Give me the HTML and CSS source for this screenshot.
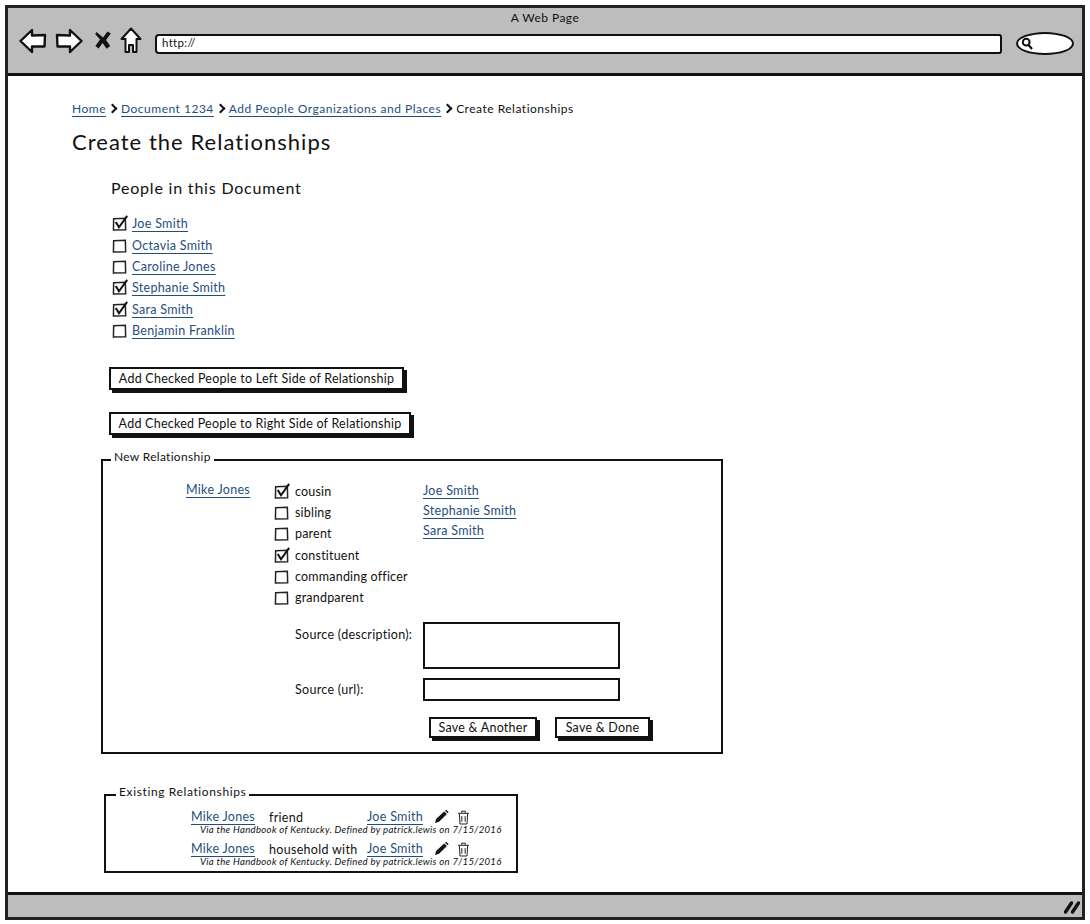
FILE: index.html
```html
<!DOCTYPE html>
<html lang="en">
<head>
    <meta charset="UTF-8">
    <meta name="viewport" content="width=device-width, initial-scale=1.0">
    <title>Create the Relationships</title>
    <link rel="stylesheet" href="styles.css">
</head>
<body>
    <svg class="icon-defs" width="0" height="0">
        <symbol id="box" viewBox="0 0 16 16">
            <path d="M2.5 3.5 L13.5 3 L13.8 14 L2.3 14.2 Z" fill="#fff" stroke="#222" stroke-width="1.4"/>
        </symbol>
        <symbol id="box-checked" viewBox="0 0 16 16">
            <path d="M2.5 3.5 L13.5 3 L13.8 14 L2.3 14.2 Z" fill="#fff" stroke="#222" stroke-width="1.4"/>
            <path d="M4.5 6.5 L7.5 11.5 L15.2 .8" fill="none" stroke="#111" stroke-width="1.9"/>
        </symbol>
        <symbol id="pencil" viewBox="0 0 16 16">
            <path d="M1 15 L2.2 10.6 L10.8 2.6 L13.8 5.4 L5.4 13.6 Z" fill="#111"/>
            <path d="M11.8 1.8 L13 .8 L15.6 3.4 L14.6 4.6 Z" fill="#111"/>
        </symbol>
        <symbol id="trash" viewBox="0 0 14 16">
            <path d="M1 3.5 H13 M5 3 V1.2 H9 V3 M2.6 4 L3.2 15 H10.8 L11.4 4 M5.2 6.5 V12.5 M8.8 6.5 V12.5" fill="none" stroke="#111" stroke-width="1"/>
        </symbol>
    </svg>

    <div class="window">
        <header class="chrome">
            <div class="chrome-title">A Web Page</div>
            <div class="toolbar">
                <svg class="nav-icon back" width="28" height="26" viewBox="0 0 28 26"><path d="M1.5 13 L13 2 V7.5 L26 7 L25.5 18.5 L13 18.5 V24 Z" fill="#fff" stroke="#111" stroke-width="2.4" stroke-linejoin="round"/></svg>
                <svg class="nav-icon" width="28" height="26" viewBox="0 0 28 26"><path d="M26.5 13 L15 2 V7.5 L2 7 L2.5 18.5 L15 18.5 V24 Z" fill="#fff" stroke="#111" stroke-width="2.4" stroke-linejoin="round"/></svg>
                <svg class="nav-icon stop" width="16" height="18" viewBox="0 0 16 18"><path d="M1.5 1 L8 6.5 L12.5 .5 L15.8 2.5 L11 9 L15.2 15 L11.6 17.7 L7.6 12 L3.6 17.5 L.4 15 L5 8.6 L.2 3 Z" fill="#111"/></svg>
                <svg class="nav-icon home" width="22" height="27" viewBox="0 0 22 27"><path d="M11 1.5 L20.5 12 L16.5 12 L16.5 25 L13 25 L13 18 L9 18 L9 25 L5.5 25 L5.5 12 L1.5 12 Z" fill="#fff" stroke="#111" stroke-width="2" stroke-linejoin="round"/></svg>
                <div class="url-bar">http://</div>
                <div class="search-box">
                    <svg width="12" height="13" viewBox="0 0 12 13"><circle cx="5.2" cy="5.2" r="3.4" fill="none" stroke="#111" stroke-width="2"/><path d="M7.5 8 L11 12" stroke="#111" stroke-width="2.2"/></svg>
                </div>
            </div>
        </header>

        <main class="content">
            <nav class="breadcrumb">
                <a href="#">Home</a><span class="crumb-sep"></span>
                <a href="#">Document 1234</a><span class="crumb-sep"></span>
                <a href="#">Add People Organizations and Places</a><span class="crumb-sep"></span>
                <span>Create Relationships</span>
            </nav>
            <h1>Create the Relationships</h1>

            <h2>People in this Document</h2>
            <ul class="check-list people">
                <li><svg class="check"><use href="#box-checked"/></svg><a href="#">Joe Smith</a></li>
                <li><svg class="check"><use href="#box"/></svg><a href="#">Octavia Smith</a></li>
                <li><svg class="check"><use href="#box"/></svg><a href="#">Caroline Jones</a></li>
                <li><svg class="check"><use href="#box-checked"/></svg><a href="#">Stephanie Smith</a></li>
                <li><svg class="check"><use href="#box-checked"/></svg><a href="#">Sara Smith</a></li>
                <li><svg class="check"><use href="#box"/></svg><a href="#">Benjamin Franklin</a></li>
            </ul>

            <div class="add-buttons">
                <button type="button" class="sketch-btn add-left">Add Checked People to Left Side of Relationship</button>
                <button type="button" class="sketch-btn add-right">Add Checked People to Right Side of Relationship</button>
            </div>

            <fieldset class="new-rel">
                <legend>New Relationship</legend>
                <div class="new-rel-top">
                    <div class="rel-left"><a href="#">Mike Jones</a></div>
                    <ul class="check-list rel-types">
                        <li><svg class="check"><use href="#box-checked"/></svg>cousin</li>
                        <li><svg class="check"><use href="#box"/></svg>sibling</li>
                        <li><svg class="check"><use href="#box"/></svg>parent</li>
                        <li><svg class="check"><use href="#box-checked"/></svg>constituent</li>
                        <li><svg class="check"><use href="#box"/></svg>commanding officer</li>
                        <li><svg class="check"><use href="#box"/></svg>grandparent</li>
                    </ul>
                    <div class="rel-right">
                        <a href="#">Joe Smith</a>
                        <a href="#">Stephanie Smith</a>
                        <a href="#">Sara Smith</a>
                    </div>
                </div>
                <div class="source-row source-desc">
                    <label>Source (description):</label>
                    <div class="sketch-input tall"></div>
                </div>
                <div class="source-row source-url">
                    <label>Source (url):</label>
                    <div class="sketch-input"></div>
                </div>
                <div class="save-row">
                    <button type="button" class="sketch-btn save-another">Save &amp; Another</button>
                    <button type="button" class="sketch-btn save-done">Save &amp; Done</button>
                </div>
            </fieldset>

            <fieldset class="existing">
                <legend>Existing Relationships</legend>
                <div class="rel-row">
                    <a href="#">Mike Jones</a><span class="verb">friend</span><a href="#">Joe Smith</a>
                    <svg class="row-icon"><use href="#pencil"/></svg>
                    <svg class="row-icon trash"><use href="#trash"/></svg>
                </div>
                <p class="rel-note">Via the Handbook of Kentucky. Defined by patrick.lewis on 7/15/2016</p>
                <div class="rel-row">
                    <a href="#">Mike Jones</a><span class="verb">household with</span><a href="#">Joe Smith</a>
                    <svg class="row-icon"><use href="#pencil"/></svg>
                    <svg class="row-icon trash"><use href="#trash"/></svg>
                </div>
                <p class="rel-note">Via the Handbook of Kentucky. Defined by patrick.lewis on 7/15/2016</p>
            </fieldset>
        </main>

        <footer class="status-bar">
            <svg width="16" height="15" viewBox="0 0 16 15"><path d="M1.5 13 L7.5 4 M8.5 13 L14.5 4" stroke="#111" stroke-width="3.4" stroke-linecap="round"/></svg>
        </footer>
    </div>
</body>
</html>
```

FILE: styles.css
```css
* {
    box-sizing: border-box;
}

body {
    margin: 0;
    background-color: #fff;
    color: #111;
    font-family: "Lato", "Noto Sans", sans-serif;
    font-size: 12.5px;
    letter-spacing: 0.3px;
}

.icon-defs {
    position: absolute;
}

a {
    color: #1f4e80;
    text-decoration: underline;
    text-decoration-skip-ink: none;
    text-underline-offset: 3px;
}

.window {
    display: flex;
    flex-direction: column;
    width: 1080px;
    height: 915px;
    margin: 5px 0 0 5px;
    border: 3px solid #222;
}

/* browser chrome */
.chrome {
    height: 68px;
    background-color: #bdbdbd;
    border-bottom: 3px solid #111;
}

.chrome-title {
    padding-top: 2px;
    text-align: center;
    font-size: 12px;
    line-height: 15px;
    letter-spacing: 0.45px;
}

.toolbar {
    display: flex;
    align-items: center;
    height: 31px;
    margin-top: 2px;
    padding-left: 11px;
}

.nav-icon {
    flex: none;
    margin-top: -4px;
    margin-right: 10px;
}

.nav-icon.back {
    margin-right: 8px;
}

.nav-icon.stop {
    margin-left: 2px;
    margin-right: 9px;
    margin-top: -6px;
}

.nav-icon.home {
    margin-right: 13px;
}

.url-bar {
    width: 847px;
    height: 20px;
    margin-top: 2px;
    padding-left: 5px;
    background-color: #fff;
    border: 2px solid #111;
    border-radius: 4px 3px 3px 4px;
    font-size: 11.5px;
    line-height: 14px;
}

.search-box {
    display: flex;
    align-items: center;
    width: 58px;
    height: 23px;
    margin-left: 14px;
    margin-top: 2px;
    padding-left: 3px;
    background-color: #fff;
    border: 2px solid #111;
    border-radius: 50%;
}

/* page */
.content {
    flex: 1;
    padding: 24px 0 0 64px;
    overflow: hidden;
}

.breadcrumb {
    display: flex;
    align-items: center;
    height: 16px;
    font-size: 12px;
    letter-spacing: 0.5px;
}

.crumb-sep {
    width: 7px;
    height: 7px;
    margin: 0 5px 0 3px;
    border-top: 2.5px solid #111;
    border-right: 2.5px solid #111;
    transform: rotate(45deg);
}

h1 {
    margin: 10px 0 0;
    font-size: 22px;
    font-weight: 400;
    line-height: 32px;
    letter-spacing: 1.03px;
}

h2 {
    margin: 19px 0 0 39px;
    font-size: 16px;
    font-weight: 400;
    line-height: 22px;
    letter-spacing: 0.8px;
}

.check-list {
    margin: 0;
    padding: 0;
    list-style: none;
}

.check-list li {
    display: flex;
    align-items: center;
    gap: 4px;
    height: 21.4px;
}

.check {
    flex: none;
    width: 17px;
    height: 17px;
}

.people {
    margin: 14px 0 0 39px;
}

.add-buttons {
    display: flex;
    flex-direction: column;
    align-items: flex-start;
    gap: 22px;
    margin: 26px 0 0 37px;
}

.sketch-btn {
    height: 23px;
    padding: 0;
    background-color: #fff;
    border: 2px solid #111;
    box-shadow: 3px 3px 0 #111;
    color: #111;
    font: inherit;
    letter-spacing: 0.24px;
}

.add-left {
    width: 295px;
}

.add-right {
    width: 302px;
}

fieldset {
    margin: 0;
    padding: 0;
    border: 2px solid #111;
    min-width: 0;
}

legend {
    margin-left: 8px;
    padding: 0 3px 6px;
    font-size: 12px;
    line-height: 15px;
}

.new-rel {
    width: 622px;
    height: 305px;
    margin: 14px 0 0 29px;
}

.new-rel-top {
    display: flex;
    padding: 8px 0 0 83px;
}

.rel-left {
    width: 87px;
    padding-top: 4px;
}

.rel-types {
    width: 150px;
    padding-top: 2px;
    letter-spacing: 0.2px;
}

.rel-types li {
    gap: 5px;
}

.rel-right {
    display: flex;
    flex-direction: column;
    align-items: flex-start;
    gap: 5px;
    padding-top: 5px;
}

.source-row {
    display: flex;
    padding-left: 192px;
}

.source-row label {
    width: 128px;
}

.source-desc {
    margin-top: 13px;
}

.source-desc label {
    padding-top: 5px;
}

.source-url {
    align-items: center;
    margin-top: 9px;
}

.sketch-input {
    width: 197px;
    height: 23px;
    background-color: #fff;
    border: 2px solid #111;
}

.sketch-input.tall {
    height: 47px;
}

.save-row {
    display: flex;
    gap: 18px;
    margin-top: 16px;
    padding-left: 326px;
}

.save-row .sketch-btn {
    height: 21px;
}

.save-another {
    width: 108px;
}

.save-done {
    width: 95px;
}

.existing {
    width: 414px;
    height: 89px;
    margin: 30px 0 0 32px;
    padding-top: 4px;
}

.existing legend {
    margin-left: 10px;
    letter-spacing: 0.62px;
}

.rel-row {
    display: flex;
    align-items: center;
    height: 15px;
    padding-left: 85px;
}

.rel-row a:first-child {
    width: 78px;
    flex: none;
}

.verb {
    width: 98px;
    flex: none;
    padding-top: 2px;
}

.rel-row a:nth-child(3) {
    flex: none;
    width: 67px;
}

.row-icon {
    flex: none;
    width: 15px;
    height: 15px;
}

.trash {
    margin-left: 8px;
    margin-top: 2px;
    width: 13px;
}

.rel-note {
    margin: 0 0 6px;
    padding-left: 94px;
    font-size: 9.6px;
    font-style: italic;
    line-height: 11px;
}

.status-bar {
    display: flex;
    justify-content: flex-end;
    align-items: center;
    height: 25px;
    padding-right: 2px;
    background-color: #bdbdbd;
    border-top: 3px solid #111;
}
```
